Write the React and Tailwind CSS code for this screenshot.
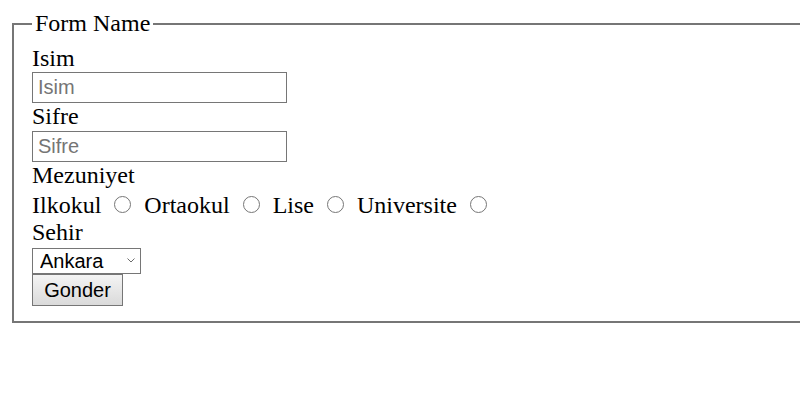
export default function App() {
  return (
    <div className="w-full h-[400px] overflow-hidden bg-white text-black font-['Liberation_Serif','Times_New_Roman',serif] text-[24px] leading-[27px]">
      <div className="pl-[12px] pt-[10px]">
        <fieldset className="w-[840px] border-2 border-[#767676] px-[18px] pt-[8px] pb-[15px]">
          <legend className="px-[3px]">Form Name</legend>
          <form className="flex flex-col items-start" onSubmit={(e) => e.preventDefault()}>
            <label htmlFor="isim" className="block h-[27px]">Isim</label>
            <input
              id="isim"
              type="text"
              placeholder="Isim"
              className="h-[31px] w-[255px] border border-[#767676] px-[5px] font-['Liberation_Sans',Arial,sans-serif] text-[20px] placeholder:text-[#757575]"
            />
            <label htmlFor="sifre" className="block h-[27px]">Sifre</label>
            <input
              id="sifre"
              type="password"
              placeholder="Sifre"
              className="mt-[1px] h-[31px] w-[255px] border border-[#767676] px-[5px] font-['Liberation_Sans',Arial,sans-serif] text-[20px] placeholder:text-[#757575]"
            />
            <div className="h-[27px]">Mezuniyet</div>
            <div className="h-[27px] mt-[3px] whitespace-nowrap">
              Ilkokul <input type="radio" name="mezuniyet" className="w-[17px] h-[17px] ml-[7px] mr-[7px] align-baseline" />{" "}
              Ortaokul <input type="radio" name="mezuniyet" className="w-[17px] h-[17px] ml-[7px] mr-[7px] align-baseline" />{" "}
              Lise <input type="radio" name="mezuniyet" className="w-[17px] h-[17px] ml-[7px] mr-[7px] align-baseline" />{" "}
              Universite <input type="radio" name="mezuniyet" className="w-[17px] h-[17px] ml-[7px] mr-[7px] align-baseline" />
            </div>
            <label htmlFor="sehir" className="block h-[27px]">Sehir</label>
            <div className="relative mt-[1px]">
              <select
                id="sehir"
                className="appearance-none h-[26px] w-[109px] border border-[#767676] pl-[7px] font-['Liberation_Sans',Arial,sans-serif] text-[20px] leading-[24px]"
              >
                <option>Ankara</option>
                <option>Istanbul</option>
                <option>Izmir</option>
              </select>
              <svg
                className="pointer-events-none absolute right-[6px] top-[11px]"
                width="8"
                height="5"
                viewBox="0 0 8 5"
              >
                <polyline points="0.5,0.5 4,4 7.5,0.5" fill="none" stroke="#6b6b6b" strokeWidth="1" />
              </svg>
            </div>
            <button
              type="submit"
              className="h-[32px] w-[91px] border border-[#767676] bg-linear-to-b from-[#f4f4f4] to-[#dadada] font-['Liberation_Sans',Arial,sans-serif] text-[20px]"
            >
              Gonder
            </button>
          </form>
        </fieldset>
      </div>
    </div>
  );
}
